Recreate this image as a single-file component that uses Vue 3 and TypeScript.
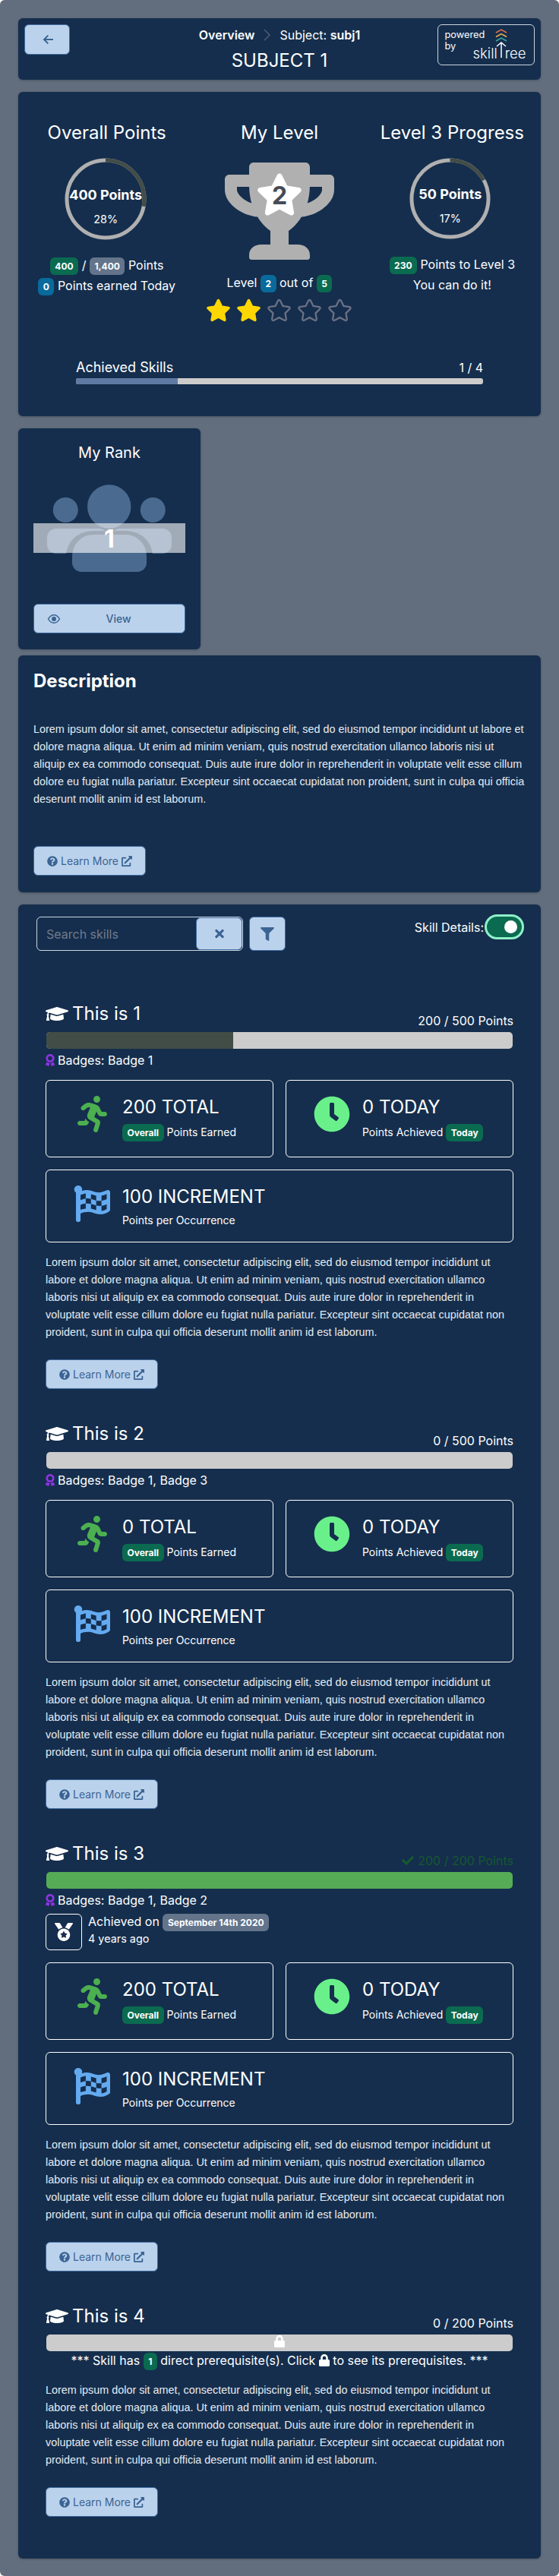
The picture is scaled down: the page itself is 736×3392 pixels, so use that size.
<script setup lang="ts">
const lorem =
  'Lorem ipsum dolor sit amet, consectetur adipiscing elit, sed do eiusmod tempor incididunt ut labore et dolore magna aliqua. Ut enim ad minim veniam, quis nostrud exercitation ullamco laboris nisi ut aliquip ex ea commodo consequat. Duis aute irure dolor in reprehenderit in voluptate velit esse cillum dolore eu fugiat nulla pariatur. Excepteur sint occaecat cupidatat non proident, sunt in culpa qui officia deserunt mollit anim id est laborum.'

const icons = {
  cap: 'M622.34 153.2L343.4 67.5c-15.2-4.67-31.6-4.67-46.79 0L17.66 153.2c-23.54 7.23-23.54 38.36 0 45.59l48.63 14.94c-10.67 13.19-17.23 29.28-17.88 46.9C38.78 266.15 32 276.11 32 288c0 10.78 5.68 19.85 13.86 25.65L20.33 428.53C18.11 438.52 25.71 448 35.94 448h56.11c10.24 0 17.84-9.48 15.62-19.47L82.14 313.65C90.32 307.85 96 298.78 96 288c0-11.57-6.47-21.25-15.66-26.87.76-15.02 8.44-28.3 20.69-36.72L296.6 284.5c9.06 2.78 26.44 6.25 46.79 0l278.95-85.7c23.55-7.24 23.55-38.36 0-45.6zM352.79 315.09c-28.53 8.76-52.84 3.92-65.59 0l-145.02-44.55L128 384c0 35.35 85.96 64 192 64s192-28.65 192-64l-14.18-113.47-145.03 44.56z',
  question: 'M504 256c0 136.997-111.043 248-248 248S8 392.997 8 256C8 119.083 119.043 8 256 8s248 111.083 248 248zM262.655 90c-54.497 0-89.255 22.957-116.549 63.758-3.536 5.286-2.353 12.415 2.715 16.258l34.699 26.31c5.205 3.947 12.621 3.008 16.665-2.122 17.864-22.658 30.113-35.797 57.303-35.797 20.429 0 45.698 13.148 45.698 32.958 0 14.976-12.363 22.667-32.534 33.976C247.128 238.528 216 254.941 216 296v4c0 6.627 5.373 12 12 12h56c6.627 0 12-5.373 12-12v-1.333c0-28.462 83.186-29.647 83.186-106.667 0-58.002-60.165-102-116.531-102zM256 338c-25.365 0-46 20.635-46 46 0 25.364 20.635 46 46 46s46-20.636 46-46c0-25.365-20.635-46-46-46z',
  external: 'M432,320H400a16,16,0,0,0-16,16V448H64V128H208a16,16,0,0,0,16-16V80a16,16,0,0,0-16-16H48A48,48,0,0,0,0,112V464a48,48,0,0,0,48,48H400a48,48,0,0,0,48-48V336A16,16,0,0,0,432,320ZM488,0h-128c-21.37,0-32.05,25.91-17,41l35.73,35.73L135,320.37a24,24,0,0,0,0,34L157.67,377a24,24,0,0,0,34,0L435.28,133.32,471,169c15,15,41,4.5,41-17V24A24,24,0,0,0,488,0Z',
  award: 'M97.12 362.63c-8.69-8.69-4.16-6.24-25.12-11.85-9.51-2.55-17.87-7.45-25.43-13.32L1.2 448.7c-4.39 10.77 3.81 22.47 15.43 22.03l52.69-2.01L105.56 507c8 8.44 22.04 5.81 26.43-4.96l52.05-127.62c-10.84 6.04-22.87 9.58-35.31 9.58-19.5 0-37.82-7.59-51.61-21.37zM382.8 448.7l-45.37-111.24c-7.56 5.88-15.92 10.77-25.43 13.32-21.07 5.64-16.45 3.18-25.12 11.85-13.79 13.78-32.12 21.37-51.62 21.37-12.44 0-24.47-3.55-35.31-9.58L252 502.04c4.39 10.77 18.44 13.4 26.43 4.96l36.25-38.28 52.69 2.01c11.62.44 19.82-11.27 15.43-22.03zM263 340c15.28-15.55 17-14.21 38.79-20.14 13.91-3.79 24.75-14.84 28.47-28.98 7.48-28.4 5.54-24.97 25.95-45.75 10.17-10.35 14.14-25.44 10.42-39.58-7.47-28.38-7.48-24.42 0-52.83 3.72-14.14-.25-29.23-10.42-39.58-20.41-20.78-18.47-17.36-25.95-45.75-3.72-14.14-14.56-25.19-28.47-28.98-27.88-7.61-24.52-5.62-44.95-26.41-10.17-10.35-25-14.4-38.89-10.61-27.87 7.6-23.98 7.61-51.9 0-13.89-3.79-28.72.25-38.89 10.61-20.41 20.78-17.05 18.8-44.94 26.41-13.91 3.79-24.75 14.84-28.47 28.98-7.47 28.39-5.54 24.97-25.95 45.75-10.17 10.35-14.15 25.44-10.42 39.58 7.47 28.36 7.48 24.4 0 52.82-3.72 14.14.25 29.23 10.42 39.59 20.41 20.78 18.47 17.35 25.95 45.75 3.72 14.14 14.56 25.19 28.47 28.98C104.6 325.96 106.27 325 121 340c13.23 13.47 33.84 15.88 49.74 5.82a39.676 39.676 0 0 1 42.53 0c15.89 10.06 36.5 7.65 49.73-5.82zM97.66 175.96c0-53.03 42.24-96.02 94.34-96.02s94.34 42.99 94.34 96.02-42.24 96.02-94.34 96.02-94.34-42.99-94.34-96.02z',
  running: 'M272 96c26.51 0 48-21.49 48-48S298.51 0 272 0s-48 21.49-48 48 21.49 48 48 48zM113.69 317.47l-14.8 34.52H32c-17.67 0-32 14.33-32 32s14.33 32 32 32h77.45c19.25 0 36.58-11.44 44.11-29.09l8.79-20.52-10.67-6.3c-17.32-10.23-30.06-25.37-37.99-42.61zM384 223.99h-44.03l-26.06-53.25c-12.5-25.55-35.45-44.23-61.78-50.94l-71.08-21.14c-28.3-6.8-57.77-.55-80.84 17.14l-39.67 30.41c-14.03 10.75-16.69 30.83-5.92 44.86s30.84 16.66 44.86 5.92l39.69-30.41c7.67-5.89 17.44-8 25.27-6.14l14.7 4.37-37.46 87.39c-12.62 29.48-1.31 64.01 26.3 80.31l84.98 50.17-27.47 87.73c-5.28 16.86 4.11 34.81 20.97 40.09 3.19 1 6.41 1.48 9.58 1.48 13.61 0 26.23-8.77 30.52-22.45l31.64-101.06c5.91-20.77-2.89-43.08-21.64-54.39l-61.24-36.14 31.31-78.28 20.27 41.43c8 16.34 24.92 26.89 43.11 26.89H384c17.67 0 32-14.33 32-32s-14.33-31.99-32-31.99z',
  clock: 'M256,8C119,8,8,119,8,256S119,504,256,504,504,393,504,256,393,8,256,8Zm92.49,313h0l-20,25a16,16,0,0,1-22.49,2.5h0l-67-49.72a40,40,0,0,1-15-31.23V112a16,16,0,0,1,16-16h32a16,16,0,0,1,16,16V256l58,42.5A16,16,0,0,1,348.49,321Z',
  flag: 'M243.2 189.9V258c26.1 5.9 49.3 15.6 73.6 22.3v-68.2c-26-5.8-49.4-15.5-73.6-22.2zm223.3-123c-34.3 15.9-76.5 31.9-117 31.9C296 98.8 251.7 64 184.3 64c-25 0-47.3 4.4-68 12 2.8-7.3 4.1-15.2 3.6-23.6C118.1 24 94.8 1.1 66.4.1 34.5-1 8 24.5 8 56c0 19 9.5 35.7 24 45.8V488c0 13.3 10.7 24 24 24h16c13.3 0 24-10.7 24-24v-94.4c28.3-12.1 63.6-22.1 114.4-22.1 53.6 0 97.8 34.8 165.2 34.8 48.2 0 86.7-16.3 122.5-40.9 8.7-6 13.8-15.8 13.8-26.2V92.3c.1-21.7-22.5-36.9-45.4-25.4zM169.6 325.5c-25.8 2.7-50 8.5-73.6 16.8v-70.5c26.2-9.3 47.5-15 73.6-17.4V325.5zM464 191c-23.6 9.8-46.3 19.5-73.6 23.9V286c24.8-3.4 51.4-11.8 73.6-26v70c-25.1 16.1-48.5 24.7-73.6 27.1V286c-27 3.7-47.9 1.5-73.6-5.6v67.4c-23.9-7.4-47.3-16.7-73.6-21.3V258c-19.7-4.4-40.8-6.8-73.6-3.8v-70c-22.4 3.1-44.6 10.2-73.6 20.9v-70.5c33.2-12.2 50.1-19.8 73.6-22v71.6c27-3.7 48.4-1.3 73.6 5.7v-67.4c23.7 7.4 47.2 16.7 73.6 21.3v68.4c23.7 5.3 47.6 6.9 73.6 2.7V143c27-4.8 52.3-13.6 73.6-22.5V191z',
  lock: 'M400 224h-24v-72C376 68.2 307.8 0 224 0S72 68.2 72 152v72H48c-26.5 0-48 21.5-48 48v192c0 26.5 21.5 48 48 48h352c26.5 0 48-21.5 48-48V272c0-26.5-21.5-48-48-48zm-104 0H152v-72c0-39.7 32.3-72 72-72s72 32.3 72 72v72z',
  check: 'M173.898 439.404l-166.4-166.4c-9.997-9.997-9.997-26.206 0-36.204l36.203-36.204c9.997-9.998 26.207-9.998 36.204 0L192 312.69 432.095 72.596c9.997-9.997 26.207-9.997 36.204 0l36.203 36.204c9.997 9.997 9.997 26.206 0 36.204l-294.4 294.401c-9.998 9.997-26.207 9.997-36.204-.001z',
  medal: 'M223.75 130.75L154.62 15.54A31.997 31.997 0 0 0 127.18 0H16.03C3.08 0-4.5 14.57 2.92 25.18l111.27 158.96c29.72-27.77 67.52-46.83 109.56-53.39zM495.97 0H384.82c-11.24 0-21.66 5.9-27.44 15.54l-69.13 115.21c42.04 6.56 79.84 25.62 109.56 53.38L509.08 25.18C516.5 14.57 508.92 0 495.97 0zM256 160c-97.2 0-176 78.8-176 176s78.8 176 176 176 176-78.8 176-176-78.8-176-176-176zm92.52 157.26l-37.93 36.96 8.97 52.22c1.6 9.36-8.26 16.51-16.65 12.09L256 393.88l-46.9 24.65c-8.4 4.45-18.25-2.74-16.65-12.09l8.97-52.22-37.93-36.96c-6.82-6.64-3.05-18.23 6.35-19.59l52.43-7.64 23.43-47.52c1.83-3.72 5.4-5.58 8.96-5.58 3.56 0 7.15 1.87 8.99 5.58l23.43 47.52 52.43 7.64c9.4 1.36 13.17 12.95 6.35 19.59z',
  star: 'M259.3 17.8L194 150.2 47.9 171.5c-26.2 3.8-36.7 36.1-17.7 54.6l105.7 103-25 145.5c-4.5 26.3 23.2 46 46.4 33.7L288 439.6l130.7 68.7c23.2 12.2 50.9-7.4 46.4-33.7l-25-145.5 105.7-103c19-18.5 8.5-50.8-17.7-54.6L382 150.2 316.7 17.8c-11.7-23.6-45.6-23.9-57.4 0z',
  trophy: 'M552 64H448V24c0-13.3-10.7-24-24-24H152c-13.3 0-24 10.7-24 24v40H24C10.7 64 0 74.7 0 88v56c0 35.7 22.5 72.4 61.9 100.7 31.5 22.7 69.8 37.1 110 41.7C203.3 338.5 240 360 240 360v72h-48c-35.3 0-64 20.7-64 56v12c0 6.6 5.4 12 12 12h296c6.6 0 12-5.4 12-12v-12c0-35.3-28.7-56-64-56h-48v-72s36.7-21.5 68.1-73.6c40.3-4.6 78.6-19 110-41.7 39.3-28.3 61.9-65 61.9-100.7V88c0-13.3-10.7-24-24-24zM99.3 192.8C74.9 175.2 64 155.6 64 144v-16h64.2c1 32.6 5.8 61.2 12.8 86.2-15.1-5.2-29.2-12.4-41.7-21.4zM512 144c0 16.1-17.7 36.1-35.3 48.8-12.5 9-26.7 16.2-41.8 21.4 7-25 11.8-53.6 12.8-86.2H512v16z',
  filter: 'M487.976 0H24.028C2.71 0-8.047 25.866 7.058 40.971L192 225.941V432c0 7.831 3.821 15.17 10.237 19.662l80 55.98C298.02 518.69 320 507.493 320 487.98V225.941l184.947-184.97C520.021 25.896 509.338 0 487.976 0z',
  times: 'M242.72 256l100.07-100.07c12.28-12.28 12.28-32.19 0-44.48l-22.24-22.24c-12.28-12.28-32.19-12.28-44.48 0L176 189.28 75.93 89.21c-12.28-12.28-32.19-12.28-44.48 0L9.21 111.45c-12.28 12.28-12.28 32.19 0 44.48L109.28 256 9.21 356.07c-12.28 12.28-12.28 32.19 0 44.48l22.24 22.24c12.28 12.28 32.2 12.28 44.48 0L176 322.72l100.07 100.07c12.28 12.28 32.2 12.28 44.48 0l22.24-22.24c12.28-12.28 12.28-32.19 0-44.48L242.72 256z',
}

interface Skill {
  name: string
  points: string
  pct: number
  badges?: string
  done?: boolean
  locked?: boolean
  total?: number
}

const skills: Skill[] = [
  { name: 'This is 1', points: '200 / 500 Points', pct: 40, badges: 'Badge 1', total: 200 },
  { name: 'This is 2', points: '0 / 500 Points', pct: 0, badges: 'Badge 1, Badge 3', total: 0 },
  { name: 'This is 3', points: '200 / 200 Points', pct: 100, badges: 'Badge 1, Badge 2', done: true, total: 200 },
  { name: 'This is 4', points: '0 / 200 Points', pct: 0, locked: true },
]

const ringLen = 2 * Math.PI * 51
const starSlots = [true, true, false, false, false]
</script>

<template>
  <div class="page">
    <header class="card top">
      <button class="btn back">
        <svg viewBox="0 0 24 24" width="16" height="16" fill="none" stroke="currentColor" stroke-width="3">
          <path d="M21 12H4M11 4l-8 8 8 8" />
        </svg>
      </button>
      <div class="top-mid">
        <div class="crumbs">
          <b>Overview</b>
          <svg viewBox="0 0 10 20" width="9" height="18" fill="none" stroke="#5d6b7e" stroke-width="1.2">
            <path d="M1 2l8 8-8 8" />
          </svg>
          <span>Subject: <b>subj1</b></span>
        </div>
        <div class="subject">SUBJECT 1</div>
      </div>
      <div class="logo">
        <div class="powered">powered<br />by</div>
        <div class="brand-name">skill<i></i>ree</div>
        <svg class="chevrons" viewBox="0 0 16 40" width="16" height="40" fill="none" stroke-width="1.5">
          <path d="M1 5l7-4 7 4" stroke="#e8714f" />
          <path d="M1 10.5l7-4 7 4" stroke="#eeb24d" />
          <path d="M1 16l7-4 7 4" stroke="#3aa89b" />
          <path d="M2 23l6-5 6 5M8 18v20" stroke="#fff" />
        </svg>
      </div>
    </header>

    <section class="card overview">
      <div class="overview-grid">
        <div class="col">
          <h2>Overall Points</h2>
          <div class="ring">
            <svg viewBox="0 0 108 108" width="108" height="108">
              <circle cx="54" cy="54" r="51" fill="none" stroke="#b0b0b0" stroke-width="5" />
              <circle cx="54" cy="54" r="51" fill="none" stroke="#434d47" stroke-width="5"
                :stroke-dasharray="`${ringLen * 0.28} ${ringLen}`" transform="rotate(-90 54 54)" />
            </svg>
            <div class="ring-text"><b>400 Points</b><span>28%</span></div>
          </div>
          <div class="stat-lines">
            <div><span class="tag green">400</span> / <span class="tag grey">1,400</span> Points</div>
            <div><span class="tag blue">0</span> Points earned Today</div>
          </div>
        </div>
        <div class="col">
          <h2>My Level</h2>
          <div class="trophy">
            <svg class="trophy-cup" viewBox="0 0 576 512" width="144" height="128" fill="#b0b0b0">
              <path :d="icons.trophy" />
            </svg>
            <svg class="trophy-star" viewBox="0 0 576 512" width="62" height="56" fill="#fff">
              <path :d="icons.star" />
            </svg>
            <span class="trophy-num">2</span>
          </div>
          <div class="level-line">Level <span class="tag blue">2</span> out of <span class="tag green">5</span></div>
          <div class="stars">
            <svg v-for="(on, i) in starSlots" :key="i" viewBox="0 0 576 512" width="33" height="31">
              <path v-if="on" :d="icons.star" fill="#ffd700" />
              <path v-else :d="icons.star" fill="none" stroke="#6b7084" stroke-width="44" transform="translate(23 20.5) scale(.92)" />
            </svg>
          </div>
        </div>
        <div class="col">
          <h2>Level 3 Progress</h2>
          <div class="ring">
            <svg viewBox="0 0 108 108" width="107" height="107">
              <circle cx="54" cy="54" r="51" fill="none" stroke="#b0b0b0" stroke-width="5" />
              <circle cx="54" cy="54" r="51" fill="none" stroke="#434d47" stroke-width="5"
                :stroke-dasharray="`${ringLen * 0.17} ${ringLen}`" transform="rotate(-90 54 54)" />
            </svg>
            <div class="ring-text"><b>50 Points</b><span>17%</span></div>
          </div>
          <div class="stat-lines">
            <div><span class="tag green">230</span> Points to Level 3</div>
            <div>You can do it!</div>
          </div>
        </div>
      </div>
      <div class="achieved">
        <div class="achieved-row"><span>Achieved Skills</span><span class="achieved-count">1 / 4</span></div>
        <div class="achieved-bar"><div class="achieved-fill" style="width: 25%"></div></div>
      </div>
    </section>

    <section class="card rank">
      <h3>My Rank</h3>
      <div class="rank-art">
        <svg viewBox="0 0 200 130" width="200" height="130">
          <g fill="#4b6a90">
            <circle cx="42.3" cy="38.5" r="16.5" />
            <circle cx="157.3" cy="38.5" r="16.5" />
            <rect x="18" y="63" width="80" height="33" rx="12" />
            <rect x="102" y="63" width="80" height="33" rx="12" />
          </g>
          <path d="M43 120V100c0-20 16-34 36-34h42c20 0 36 14 36 34v20z" fill="#152e4d" />
          <circle cx="99.7" cy="34" r="28.7" fill="#4b6a90" />
          <path d="M51 108v-8c0-16 12-29 28-29h42c16 0 28 13 28 29v8c0 7-6 12-12 12H63c-6 0-12-5-12-12z" fill="#4b6a90" />
          <rect x="0" y="56" width="200" height="39" fill="#fff" fill-opacity=".6" />
        </svg>
        <span class="rank-num">1</span>
      </div>
      <button class="btn view">
        <svg viewBox="0 0 24 24" width="18" height="18" fill="none" stroke="currentColor" stroke-width="2">
          <path d="M2 12s4-7 10-7 10 7 10 7-4 7-10 7-10-7-10-7z" />
          <circle cx="12" cy="12" r="3" fill="currentColor" />
        </svg>
        <span>View</span>
      </button>
    </section>

    <section class="card description">
      <h1>Description</h1>
      <p class="lorem">{{ lorem }}</p>
      <button class="btn learn">
        <svg viewBox="0 0 512 512" width="14" height="14" fill="currentColor"><path :d="icons.question" /></svg>
        Learn More
        <svg viewBox="0 0 512 512" width="14" height="14" fill="currentColor"><path :d="icons.external" /></svg>
      </button>
    </section>

    <section class="card skills">
      <div class="toolbar">
        <div class="search">
          <span class="placeholder">Search skills</span>
          <button class="btn clear">
            <svg viewBox="0 0 352 512" width="12" height="17" fill="currentColor"><path :d="icons.times" /></svg>
          </button>
        </div>
        <button class="btn filter">
          <svg viewBox="0 0 512 512" width="18" height="18" fill="currentColor"><path :d="icons.filter" /></svg>
        </button>
        <div class="details">
          <span>Skill Details:</span>
          <div class="switch"><i></i></div>
        </div>
      </div>

      <article v-for="s in skills" :key="s.name" class="skill">
        <div class="skill-head">
          <div class="skill-title">
            <svg viewBox="0 0 640 512" width="30" height="24" fill="#fff"><path :d="icons.cap" /></svg>
            {{ s.name }}
          </div>
          <div class="skill-points" :class="{ done: s.done }">
            <svg v-if="s.done" viewBox="0 0 512 512" width="16" height="16" fill="currentColor"><path :d="icons.check" /></svg>
            {{ s.points }}
          </div>
        </div>
        <div class="skill-bar">
          <div class="skill-fill" :class="{ done: s.done }" :style="{ width: s.pct + '%' }"></div>
          <svg v-if="s.locked" class="bar-lock" viewBox="0 0 448 512" width="14" height="16" fill="#fff"><path :d="icons.lock" /></svg>
        </div>
        <div v-if="s.badges" class="skill-badges">
          <svg viewBox="0 0 384 512" width="12" height="16" fill="#9333ea"><path :d="icons.award" /></svg>
          Badges: {{ s.badges }}
        </div>
        <div v-if="s.done" class="achieved-on">
          <div class="medal">
            <svg viewBox="0 0 512 512" width="24" height="24" fill="#fff"><path :d="icons.medal" /></svg>
          </div>
          <div class="achieved-text">
            <div>Achieved on <span class="tag grey date">September 14th 2020</span></div>
            <div class="ago">4 years ago</div>
          </div>
        </div>
        <div v-if="s.locked" class="prereq">
          *** Skill has <span class="tag green">1</span> direct prerequisite(s). Click
          <svg viewBox="0 0 448 512" width="14" height="16" fill="#fff"><path :d="icons.lock" /></svg>
          to see its prerequisites. ***
        </div>
        <div v-if="!s.locked" class="boxes">
          <div class="box half">
            <div class="box-icon">
              <svg viewBox="0 0 416 512" width="39" height="48" fill="#4caf50"><path :d="icons.running" /></svg>
            </div>
            <div>
              <div class="box-title">{{ s.total }} TOTAL</div>
              <div class="box-sub"><span class="tag green">Overall</span> Points Earned</div>
            </div>
          </div>
          <div class="box half">
            <div class="box-icon">
              <svg viewBox="0 0 512 512" width="48" height="48" fill="#69f08b"><path :d="icons.clock" /></svg>
            </div>
            <div>
              <div class="box-title">0 TODAY</div>
              <div class="box-sub">Points Achieved <span class="tag green">Today</span></div>
            </div>
          </div>
          <div class="box full">
            <div class="box-icon">
              <svg viewBox="0 0 512 512" width="48" height="48" fill="#64aaf0"><path :d="icons.flag" /></svg>
            </div>
            <div>
              <div class="box-title">100 INCREMENT</div>
              <div class="box-sub">Points per Occurrence</div>
            </div>
          </div>
        </div>
        <p class="lorem skill-text">{{ lorem }}</p>
        <button class="btn learn">
          <svg viewBox="0 0 512 512" width="14" height="14" fill="currentColor"><path :d="icons.question" /></svg>
          Learn More
          <svg viewBox="0 0 512 512" width="14" height="14" fill="currentColor"><path :d="icons.external" /></svg>
        </button>
      </article>
    </section>
  </div>
</template>

<style scoped>
.page {
  background: #626d7d;
  border-radius: 6px;
  padding: 24px 24px 23px;
  display: flex;
  flex-direction: column;
  height: 3392px;
  box-sizing: border-box;
  font-family: Inter, "Liberation Sans", sans-serif;
  color: #fff;
  font-size: 16px;
}

.card {
  background: #152e4d;
  border-radius: 6px;
  box-shadow: 0 1px 3px rgba(0, 0, 0, 0.25);
  box-sizing: border-box;
}

.btn {
  font-family: inherit;
  background: #bbd2ec;
  border: 1px solid #3f6ba0;
  border-radius: 6px;
  color: #3b6493;
  padding: 0;
  display: inline-flex;
  align-items: center;
  justify-content: center;
}

.tag {
  display: inline-block;
  border-radius: 6px;
  padding: 0 6.5px;
  font-size: 12px;
  line-height: 23px;
  font-weight: 700;
  color: #fff;
}
.tag.green { background: #0b6b50; }
.tag.blue { background: #0a6a9c; }
.tag.grey { background: #64748b; }

/* header */
.top {
  height: 81px;
  display: grid;
  grid-template-columns: 1fr auto 1fr;
  align-items: start;
  padding: 8px;
}
.back {
  width: 60px;
  height: 40px;
  padding-left: 4px;
}
.top-mid {
  text-align: center;
  margin-top: 2px;
}
.crumbs {
  display: flex;
  justify-content: center;
  align-items: center;
  gap: 12px;
  font-size: 16px;
  line-height: 24px;
}
.crumbs b {
  font-weight: 600;
}
.subject {
  font-size: 24px;
  line-height: 36px;
  margin-top: 4px;
}
.logo {
  justify-self: end;
  width: 128px;
  height: 53.5px;
  border: 1px solid #cbd5e1;
  border-radius: 6px;
  box-sizing: border-box;
  display: flex;
  padding: 4px 0 0 8.5px;
  position: relative;
}
.powered {
  width: 37px;
  flex-shrink: 0;
  white-space: nowrap;
  font-size: 12.8px;
  line-height: 15px;
  margin-top: 1px;
}
.chevrons {
  position: absolute;
  left: 75px;
  top: 5px;
}
.brand-name {
  font-size: 18.5px;
  line-height: 24px;
  font-weight: 300;
  margin-top: 21px;
  white-space: nowrap;
}
.brand-name i {
  display: inline-block;
  width: 10px;
}

/* overview */
.overview {
  margin-top: 16px;
  height: 427px;
  padding: 36px 3px 0;
}
.overview-grid {
  display: grid;
  grid-template-columns: repeat(3, 1fr);
  height: 315px;
}
.col {
  text-align: center;
}
.col h2 {
  margin: 0;
  font-size: 24px;
  line-height: 36px;
  font-weight: 400;
}
.ring {
  width: 108px;
  height: 108px;
  margin: 15px auto 0;
  position: relative;
  left: -1.5px;
}
.ring svg {
  display: block;
}
.ring-text {
  position: absolute;
  inset: 0;
  display: flex;
  flex-direction: column;
  align-items: center;
  padding-top: 35px;
  box-sizing: border-box;
}
.col:last-child .ring {
  width: 107px;
  height: 107px;
  left: -2.5px;
}
.col:last-child .ring-text {
  padding-top: 34px;
}
.ring-text b {
  font-size: 18px;
  line-height: 27px;
  white-space: nowrap;
}
.ring-text span {
  font-size: 14.4px;
  line-height: 24px;
  margin-top: 7px;
}
.stat-lines {
  margin-top: 20px;
  line-height: 27px;
}
.trophy {
  width: 144px;
  height: 128px;
  margin: 21px auto 0;
  position: relative;
}
.trophy-cup {
  display: block;
}
.trophy-star {
  position: absolute;
  left: 41px;
  top: 14px;
}
.trophy-num {
  position: absolute;
  left: 0;
  right: 0;
  top: 24px;
  font-size: 32px;
  line-height: 40px;
  font-weight: 700;
  color: #454b57;
}
.level-line {
  margin-top: 17px;
  line-height: 27px;
}
.stars {
  display: flex;
  justify-content: center;
  gap: 7px;
  margin-top: 7px;
}
.achieved {
  margin: 0 73px;
}
.achieved-row {
  display: flex;
  justify-content: space-between;
  font-size: 18px;
  line-height: 24px;
}
.achieved-count {
  font-size: 16px;
}
.achieved-bar {
  height: 8px;
  background: #ccc;
  border-radius: 3px;
  overflow: hidden;
  margin-top: 2px;
}
.achieved-fill {
  height: 100%;
  background: #5f7ba3;
}

/* rank */
.rank {
  margin-top: 16px;
  width: 240px;
  height: 291px;
  padding: 20px;
  text-align: center;
}
.rank h3 {
  margin: 0;
  font-size: 20px;
  line-height: 24px;
  font-weight: 400;
}
.rank-art {
  position: relative;
  margin-top: 25px;
  height: 130px;
}
.rank-art svg {
  display: block;
}
.rank-num {
  position: absolute;
  left: 0;
  right: 0;
  top: 53px;
  font-size: 32px;
  line-height: 48px;
  font-weight: 700;
}
.view {
  margin-top: 32px;
  width: 200px;
  height: 39px;
  padding: 0 11px 0 17px;
  box-sizing: border-box;
  font-size: 14px;
  font-weight: 500;
}
.view span {
  flex: 1;
  text-align: center;
}

/* description */
.description {
  margin-top: 8px;
  height: 312px;
  padding: 16px 20px;
}
.description h1 {
  margin: 0;
  font-size: 24px;
  line-height: 36px;
  font-weight: 700;
}
.lorem {
  font-family: "Liberation Sans", Arial, sans-serif;
  font-size: 14.4px;
  line-height: 23.04px;
  color: #e6ebf1;
  margin: 34px 0 0;
}
.learn {
  width: 148px;
  height: 39px;
  gap: 4px;
  font-size: 14px;
  margin-top: 50px;
}

/* skills */
.skills {
  margin-top: 16px;
  flex: 1;
  padding: 16px 36px 0;
}
.toolbar {
  display: flex;
  align-items: flex-start;
  margin: 0 -14px 0 -12px;
  height: 45px;
}
.search {
  width: 272px;
  height: 45px;
  border: 1px solid #cbd5e1;
  border-radius: 6px;
  box-sizing: border-box;
  display: flex;
  justify-content: space-between;
  align-items: center;
  padding-left: 12px;
}
.placeholder {
  color: #717b8c;
}
.clear {
  width: 61px;
  height: 43px;
}
.filter {
  width: 48px;
  height: 45px;
  margin-left: 8px;
}
.details {
  margin-left: auto;
  display: flex;
  align-items: center;
  gap: 1px;
  margin-top: -3px;
}
.switch {
  width: 52px;
  height: 33px;
  background: #0b6b50;
  border: 3px solid #8ff0c8;
  border-radius: 17px;
  box-sizing: border-box;
  position: relative;
}
.switch i {
  position: absolute;
  right: 6px;
  top: 5px;
  width: 17px;
  height: 17px;
  border-radius: 50%;
  background: #fff;
}

.skill {
  margin-top: 65px;
}
.skill + .skill {
  margin-top: 40.8px;
}
.skill-head {
  display: flex;
  justify-content: space-between;
  height: 39px;
}
.skill-title {
  font-size: 24px;
  line-height: 36px;
  display: flex;
  align-items: center;
  gap: 5px;
  height: 36px;
}
.skill-points {
  align-self: flex-end;
  line-height: 24px;
  display: flex;
  align-items: center;
  gap: 5px;
}
.skill-points.done {
  color: #14592f;
}
.skill-bar {
  height: 22px;
  margin: 3px 1px 0;
  background: #ccc;
  border-radius: 5px;
  overflow: hidden;
  position: relative;
}
.skill-fill {
  height: 100%;
  background: #434d47;
}
.skill-fill.done {
  background: #56ab56;
}
.bar-lock {
  position: absolute;
  left: 300px;
  top: 1px;
}
.skill-badges {
  margin-top: 3px;
  line-height: 24px;
  display: flex;
  align-items: center;
  gap: 4px;
}
.achieved-on {
  margin: 6px 0 16px;
  display: flex;
  gap: 8px;
}
.medal {
  width: 48px;
  height: 48px;
  border: 1px solid #fff;
  border-radius: 6px;
  box-sizing: border-box;
  display: flex;
  align-items: center;
  justify-content: center;
}
.achieved-text {
  line-height: 24px;
  margin-top: -2px;
}
.ago {
  margin-top: -2px;
  font-size: 14.4px;
}
.prereq {
  text-align: center;
  line-height: 24px;
  white-space: nowrap;
}
.prereq svg {
  vertical-align: -2px;
}
.boxes {
  margin-top: 14px;
  display: grid;
  grid-template-columns: 1fr 1fr;
  gap: 16px;
}
.box {
  border: 1px solid #fff;
  border-radius: 6px;
  box-sizing: border-box;
  display: flex;
  gap: 16px;
  padding: 20px 0 0 36px;
}
.half {
  height: 102px;
}
.full {
  grid-column: 1 / 3;
  height: 96px;
}
.box-icon {
  width: 48px;
  display: flex;
  justify-content: center;
}
.box-title {
  font-size: 24px;
  line-height: 30px;
}
.box-sub {
  font-size: 14px;
  line-height: 23px;
  margin-top: 5.5px;
}
.full .box-sub {
  margin-top: 4px;
}
.skill-text {
  margin-top: 15px;
}
.skill .learn {
  margin-top: 24px;
}
</style>

<style>
html, body {
  margin: 0;
  background: #fff;
}
</style>
